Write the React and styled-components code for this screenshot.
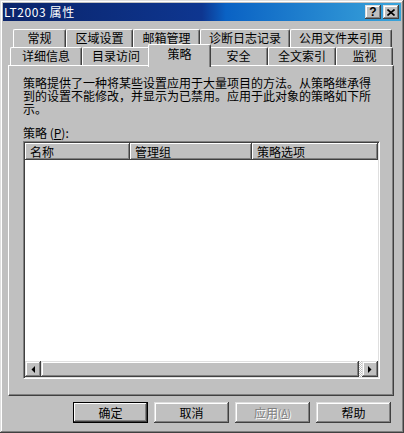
import React from "react";
import styled, { createGlobalStyle, css } from "styled-components";

const GlobalStyle = createGlobalStyle`
  html, body { margin: 0; padding: 0; background: #c0c0c0; }
  body {
    font-family: "Noto Sans CJK SC", "Liberation Sans", sans-serif;
    font-size: 12px;
    color: #000;
  }
  * { box-sizing: border-box; }
`;

const raised = css`
  box-shadow: inset -1px -1px #404040, inset 1px 1px #dfdfdf,
    inset -2px -2px #808080, inset 2px 2px #fff;
`;

const Window = styled.div`
  width: 404px;
  height: 433px;
  padding: 3px;
  background: #c0c0c0;
  ${raised}
`;

const TitleBar = styled.div`
  height: 18px;
  display: flex;
  align-items: center;
  padding: 0 2px 0 1px;
  background: linear-gradient(90deg, #0a246a 0%, #0e3690 50%, #0a62c4 56%, #3aa4da 100%);
  color: #fff;
`;

const Title = styled.span`
  flex: 1;
  font-size: 12px;
  line-height: 18px;
  letter-spacing: 0.6px;
  white-space: nowrap;
`;

const TitleButtons = styled.div`
  display: flex;
  gap: 2px;
`;

const TitleButton = styled.div`
  width: 16px;
  height: 14px;
  display: flex;
  align-items: center;
  justify-content: center;
  background: #c0c0c0;
  color: #000;
  font-family: "Liberation Sans", sans-serif;
  font-weight: bold;
  font-size: 12px;
  line-height: 14px;
  ${raised}
`;

const Body = styled.div`
  padding: 8px 7px 0 5px;
`;

const TabRow = styled.div`
  display: flex;
  height: 18px;
  margin-left: ${(p) => p.$indent}px;
`;

const Tab = styled.div`
  position: relative;
  width: ${(p) => p.$w}px;
  height: 18px;
  flex: none;
  background: #c0c0c0;
  border-top: 1px solid #fff;
  border-left: 1px solid #fff;
  border-right: 1px solid #404040;
  border-radius: 2px 2px 0 0;
  box-shadow: inset -1px 0 #808080;
  text-align: center;
  line-height: 16px;
  white-space: nowrap;
  ${(p) =>
    p.$active &&
    css`
      z-index: 2;
      height: 23px;
      margin: -3px -2px 0;
      width: ${p.$w + 4}px;
      line-height: 18px;
    `}
`;

const Panel = styled.div`
  position: relative;
  z-index: 1;
  height: 331px;
  padding: 10px 0 0 14px;
  border-top: 1px solid #fff;
  border-left: 1px solid #fff;
  border-right: 1px solid #404040;
  border-bottom: 1px solid #404040;
  box-shadow: inset -1px -1px #808080;
`;

const Description = styled.p`
  margin: 0;
  line-height: 13px;
  white-space: nowrap;
`;

const Label = styled.div`
  margin-top: 11px;
  line-height: 13px;
`;

const U = styled.span`
  text-decoration: underline;
`;

const ListBox = styled.div`
  margin-top: 2px;
  width: 357px;
  height: 238px;
  padding: 1px;
  background: #fff;
  border-top: 1px solid #808080;
  border-left: 1px solid #808080;
  border-right: 1px solid #fff;
  border-bottom: 1px solid #fff;
  box-shadow: inset 1px 1px #404040, inset -1px -1px #dfdfdf;
  display: flex;
  flex-direction: column;
`;

const Header = styled.div`
  display: flex;
  height: 17px;
  flex: none;
`;

const HeaderCell = styled.div`
  width: ${(p) => p.$w}px;
  background: #c0c0c0;
  padding-left: 5px;
  line-height: 17px;
  box-shadow: inset -1px -1px #404040, inset 1px 1px #fff, inset -2px -2px #808080;
`;

const Rows = styled.div`
  flex: 1;
`;

const ScrollBar = styled.div`
  display: flex;
  height: 16px;
  flex: none;
`;

const ArrowButton = styled.div`
  width: 16px;
  height: 16px;
  flex: none;
  display: flex;
  align-items: center;
  justify-content: center;
  background: #c0c0c0;
  ${raised}
`;

const Thumb = styled.div`
  flex: 1;
  background: #c0c0c0;
  ${raised}
`;

const Track = styled.div`
  width: 3px;
  background: repeating-conic-gradient(#fff 0 25%, #c0c0c0 0 50%) 0 0 / 2px 2px;
`;

const ButtonRow = styled.div`
  display: flex;
  justify-content: flex-end;
  gap: 6px;
  margin-top: 6px;
  padding-right: 3px;
`;

const Button = styled.div`
  width: 75px;
  height: 21px;
  display: flex;
  align-items: center;
  justify-content: center;
  background: #c0c0c0;
  color: ${(p) => (p.$disabled ? "#808080" : "#000")};
  text-shadow: ${(p) => (p.$disabled ? "1px 1px #fff" : "none")};
  ${(p) =>
    p.$default
      ? css`
          box-shadow: inset 0 0 0 1px #000, inset -2px -2px #404040,
            inset 2px 2px #fff, inset -3px -3px #808080;
        `
      : raised}
`;

const Small = styled.span`
  font-size: 10px;
`;

const Arrow = ({ dir }) => (
  <svg width="4" height="7" viewBox="0 0 4 7">
    {dir === "left" ? <polygon points="4,0 4,7 0.5,3.5" fill="#000" /> : <polygon points="0,0 0,7 3.5,3.5" fill="#000" />}
  </svg>
);

const CloseGlyph = () => (
  <svg width="8" height="7" viewBox="0 0 8 7">
    <path d="M0.5 0.5 L7.5 6.5 M7.5 0.5 L0.5 6.5" stroke="#000" strokeWidth="1.6" />
  </svg>
);

const backTabs = [
  ["常规", 53],
  ["区域设置", 67],
  ["邮箱管理", 67],
  ["诊断日志记录", 90],
  ["公用文件夹引用", 102],
];

const frontTabs = [
  ["详细信息", 72],
  ["目录访问", 68],
  ["策略", 59, true],
  ["安全", 59],
  ["全文索引", 68],
  ["监视", 57],
];

export default function App() {
  return (
    <>
      <GlobalStyle />
      <Window>
        <TitleBar>
          <Title>LT2003 属性</Title>
          <TitleButtons>
            <TitleButton>?</TitleButton>
            <TitleButton>
              <CloseGlyph />
            </TitleButton>
          </TitleButtons>
        </TitleBar>
        <Body>
          <TabRow $indent={5}>
            {backTabs.map(([t, w]) => (
              <Tab key={t} $w={w}>{t}</Tab>
            ))}
          </TabRow>
          <TabRow $indent={2}>
            {frontTabs.map(([t, w, a]) => (
              <Tab key={t} $w={w} $active={a}>{t}</Tab>
            ))}
          </TabRow>
          <Panel>
            <Description>
              策略提供了一种将某些设置应用于大量项目的方法。从策略继承得
              <br />
              到的设置不能修改，并显示为已禁用。应用于此对象的策略如下所
              <br />
              示。
            </Description>
            <Label>
              策略 (<U>P</U>):
            </Label>
            <ListBox>
              <Header>
                <HeaderCell $w={105}>名称</HeaderCell>
                <HeaderCell $w={122}>管理组</HeaderCell>
                <HeaderCell $w={126}>策略选项</HeaderCell>
              </Header>
              <Rows />
              <ScrollBar>
                <ArrowButton>
                  <Arrow dir="left" />
                </ArrowButton>
                <Thumb />
                <Track />
                <ArrowButton>
                  <Arrow dir="right" />
                </ArrowButton>
              </ScrollBar>
            </ListBox>
          </Panel>
          <ButtonRow>
            <Button $default>确定</Button>
            <Button>取消</Button>
            <Button $disabled>
              应用 <Small>(<U>A</U>)</Small>
            </Button>
            <Button>帮助</Button>
          </ButtonRow>
        </Body>
      </Window>
    </>
  );
}
